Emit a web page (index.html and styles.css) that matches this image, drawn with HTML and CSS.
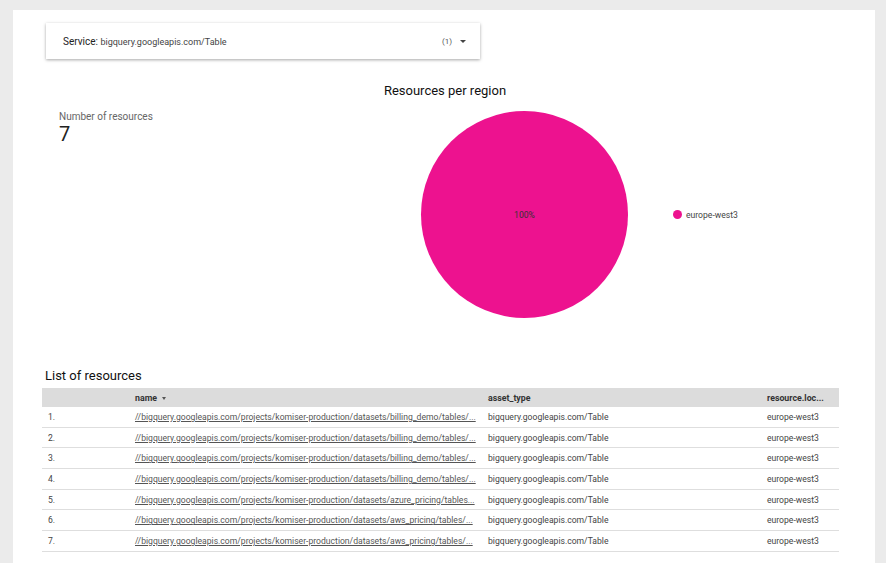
FILE: index.html
```html
<!DOCTYPE html>
<html>
<head>
<meta charset="utf-8">
<link rel="stylesheet" href="styles.css">
</head>
<body>
<div class="card">
  <div class="filter">
    <div class="filter-label"><span class="filter-key">Service</span>: <span class="filter-val">bigquery.googleapis.com/Table</span></div>
    <div class="filter-count">(1)<span class="caret"></span></div>
  </div>

  <div class="chart-title">Resources per region</div>
  <div class="chart-row">
    <div class="kpi">
      <div class="kpi-label">Number of resources</div>
      <div class="kpi-value">7</div>
    </div>
    <div class="pie"><span class="pie-label">100%</span></div>
    <div class="legend">
      <span class="legend-dot"></span><span class="legend-text">europe-west3</span>
    </div>
  </div>

  <div class="list-title">List of resources</div>
  <div class="table">
    <div class="row head">
      <div class="cell"></div>
      <div class="cell">name <span class="sort"></span></div>
      <div class="cell">asset_type</div>
      <div class="cell trunc">resource.loc...</div>
    </div>
    <div class="row"><div class="cell">1.</div><div class="cell link">//bigquery.googleapis.com/projects/komiser-production/datasets/billing_demo/tables/...</div><div class="cell">bigquery.googleapis.com/Table</div><div class="cell">europe-west3</div></div>
    <div class="row"><div class="cell">2.</div><div class="cell link">//bigquery.googleapis.com/projects/komiser-production/datasets/billing_demo/tables/...</div><div class="cell">bigquery.googleapis.com/Table</div><div class="cell">europe-west3</div></div>
    <div class="row"><div class="cell">3.</div><div class="cell link">//bigquery.googleapis.com/projects/komiser-production/datasets/billing_demo/tables/...</div><div class="cell">bigquery.googleapis.com/Table</div><div class="cell">europe-west3</div></div>
    <div class="row"><div class="cell">4.</div><div class="cell link">//bigquery.googleapis.com/projects/komiser-production/datasets/billing_demo/tables/...</div><div class="cell">bigquery.googleapis.com/Table</div><div class="cell">europe-west3</div></div>
    <div class="row"><div class="cell">5.</div><div class="cell link">//bigquery.googleapis.com/projects/komiser-production/datasets/azure_pricing/tables...</div><div class="cell">bigquery.googleapis.com/Table</div><div class="cell">europe-west3</div></div>
    <div class="row"><div class="cell">6.</div><div class="cell link">//bigquery.googleapis.com/projects/komiser-production/datasets/aws_pricing/tables/...</div><div class="cell">bigquery.googleapis.com/Table</div><div class="cell">europe-west3</div></div>
    <div class="row"><div class="cell">7.</div><div class="cell link">//bigquery.googleapis.com/projects/komiser-production/datasets/aws_pricing/tables/...</div><div class="cell">bigquery.googleapis.com/Table</div><div class="cell">europe-west3</div></div>
  </div>
</div>
</body>
</html>
```

FILE: styles.css
```css
html, body {
  margin: 0;
  padding: 0;
  background: #ebebeb;
  font-family: Roboto, "Liberation Sans", sans-serif;
  overflow: hidden;
}

.card {
  margin: 10px 0 0 13px;
  width: 862px;
  height: 560px;
  background: #ffffff;
  padding: 13px 0 0 29px;
  box-sizing: border-box;
}

.filter {
  margin-left: 4px;
  width: 434px;
  height: 36px;
  box-sizing: border-box;
  box-shadow: 0 1px 3px rgba(0, 0, 0, 0.35);
  display: flex;
  align-items: center;
  justify-content: space-between;
  padding: 0 14px 0 17px;
}

.filter-label {
  font-size: 10px;
  color: #333;
}

.filter-key {
  color: #222;
}

.filter-val {
  font-size: 9px;
  color: #444;
}

.filter-count {
  font-size: 8px;
  color: #555;
  display: flex;
  align-items: center;
}

.caret {
  display: inline-block;
  margin-left: 8px;
  width: 0;
  height: 0;
  border-left: 3px solid transparent;
  border-right: 3px solid transparent;
  border-top: 3px solid #444;
}

.chart-title {
  width: 806px;
  margin-top: 24px;
  text-align: center;
  font-size: 13px;
  line-height: 15px;
  color: #111;
}

.chart-row {
  display: grid;
  grid-template-columns: 379px 207px auto;
  margin-top: 13px;
}

.kpi {
  padding-left: 17px;
  padding-top: 0;
}

.kpi-label {
  font-size: 10px;
  line-height: 12px;
  color: #666;
}

.kpi-value {
  font-size: 20px;
  line-height: 22px;
  color: #222;
}

.pie {
  width: 207px;
  height: 207px;
  border-radius: 50%;
  background: #ed128f;
  display: flex;
  align-items: center;
  justify-content: center;
}

.pie-label {
  font-size: 8.6px;
  color: #333;
}

.legend {
  display: flex;
  align-items: center;
  padding-left: 45px;
}

.legend-dot {
  width: 9px;
  height: 9px;
  border-radius: 50%;
  background: #ed128f;
  margin-right: 4px;
}

.legend-text {
  font-size: 8.6px;
  color: #444;
}

.list-title {
  margin-top: 50px;
  margin-left: 3px;
  font-size: 13px;
  line-height: 16px;
  color: #111;
}

.table {
  margin-top: 4px;
  width: 797px;
  font-size: 8.6px;
  color: #444;
}

.row {
  display: grid;
  grid-template-columns: 87px 353px 279px 78px;
  height: 20.7px;
  box-sizing: border-box;
  border-bottom: 1px solid #dedede;
  align-items: center;
}

.row.head {
  height: 19px;
  background: #dcdcdc;
  border-bottom: none;
  font-weight: bold;
  color: #333;
  font-size: 8.8px;
}

.cell {
  padding-left: 6px;
  white-space: nowrap;
  overflow: hidden;
}

.link {
  text-decoration: underline;
  color: #555;
}

.sort {
  display: inline-block;
  margin-left: 3px;
  vertical-align: middle;
  width: 0;
  height: 0;
  border-left: 2.5px solid transparent;
  border-right: 2.5px solid transparent;
  border-top: 3px solid #555;
}
```
